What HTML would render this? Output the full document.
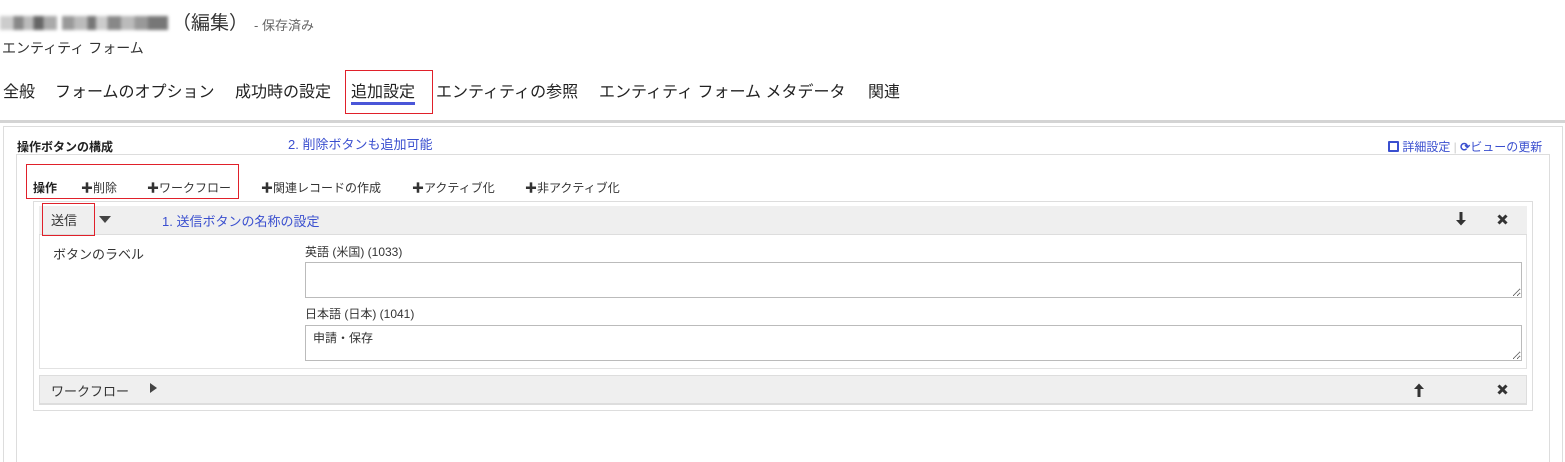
<!DOCTYPE html>
<html><head><meta charset="utf-8"><style>
html,body{margin:0;width:1565px;height:462px;overflow:hidden}
body{background:#fff;font-family:"Liberation Sans","Noto Sans CJK JP",sans-serif;color:#333;position:relative}
.a{position:absolute;white-space:nowrap}
.blue{color:#3a4fcf}
.red{position:absolute;border:1px solid #e0202a}
textarea{position:absolute;border:1px solid #bbb;resize:both;font:12px "Liberation Sans","Noto Sans CJK JP",sans-serif;padding:3px 7px;box-sizing:border-box;margin:0;color:#333}
.plus{font-weight:bold}
</style></head><body>
<div class="a" style="left:0;top:12px;height:20px;width:170px">
<span style="display:inline-block;width:168px;height:14px;margin-top:4px;filter:blur(1.5px);background:linear-gradient(90deg,#ccc 0 8%,#888 8% 14%,#bbb 14% 20%,#666 20% 26%,#aaa 26% 34%,#fff 34% 37%,#999 37% 44%,#bbb 44% 52%,#777 52% 57%,#ccc 57% 64%,#888 64% 72%,#bbb 72% 80%,#999 80% 88%,#777 88% 100%)"></span></div>
<div class="a" style="left:172px;top:8px;font-size:19px;color:#333">（編集）</div>
<div class="a" style="left:254px;top:15px;font-size:13px;color:#666">- 保存済み</div>
<div class="a" style="left:2px;top:38px;font-size:14px;color:#333">エンティティ フォーム</div>
<div class="a" style="left:3px;top:78px;font-size:16px;color:#222">全般</div>
<div class="a" style="left:55px;top:78px;font-size:16px;color:#222">フォームのオプション</div>
<div class="a" style="left:235px;top:78px;font-size:16px;color:#222">成功時の設定</div>
<div class="a" style="left:351px;top:78px;font-size:16px;color:#222">追加設定</div>
<div class="a" style="left:351px;top:102px;width:64px;height:3px;background:#4a56d8"></div>
<div class="red" style="left:345px;top:70px;width:86px;height:42px"></div>
<div class="a" style="left:436px;top:78px;font-size:16px;color:#222">エンティティの参照</div>
<div class="a" style="left:599px;top:78px;font-size:16px;color:#222">エンティティ フォーム メタデータ</div>
<div class="a" style="left:868px;top:78px;font-size:16px;color:#222">関連</div>
<div class="a" style="left:0;top:120px;width:1565px;height:3px;background:#d4d4d4"></div>
<div class="a" style="left:3px;top:126px;width:1558px;height:336px;border:1px solid #ddd;border-bottom:none"></div>
<div class="a" style="left:17px;top:138px;font-size:12px;font-weight:bold;color:#222">操作ボタンの構成</div>
<div class="a blue" style="left:288px;top:134px;font-size:13px">2. 削除ボタンも追加可能</div>
<div class="a" style="left:1388px;top:138px;font-size:12px;color:#3a4fcf"><span style="display:inline-block;width:7px;height:7px;border:2px solid #3a4fcf;border-radius:1px;vertical-align:-1px"></span> 詳細設定 <span style="color:#ccc">|</span> <b>⟳</b>ビューの更新</div>
<div class="a" style="left:16px;top:154px;width:1532px;height:308px;border:1px solid #ddd;border-bottom:none"></div>
<div class="red" style="left:26px;top:164px;width:211px;height:33px"></div>
<div class="a" style="left:33px;top:179px;font-size:12px;font-weight:bold;color:#222">操作</div>
<div class="a" style="left:81px;top:179px;font-size:12px;color:#333"><span class="plus">✚</span>削除</div>
<div class="a" style="left:147px;top:179px;font-size:12px;color:#333"><span class="plus">✚</span>ワークフロー</div>
<div class="a" style="left:261px;top:179px;font-size:12px;color:#333"><span class="plus">✚</span>関連レコードの作成</div>
<div class="a" style="left:412px;top:179px;font-size:12px;color:#333"><span class="plus">✚</span>アクティブ化</div>
<div class="a" style="left:525px;top:179px;font-size:12px;color:#333"><span class="plus">✚</span>非アクティブ化</div>
<div class="a" style="left:33px;top:201px;width:1498px;height:208px;border:1px solid #ddd"></div>
<div class="a" style="left:39px;top:206px;width:1488px;height:28px;background:#efefef;border-bottom:1px solid #ddd"></div>
<div class="a" style="left:39px;top:235px;width:1488px;height:134px;border:1px solid #e2e2e2;border-top:none;box-sizing:border-box"></div>
<div class="red" style="left:42px;top:203px;width:51px;height:31px"></div>
<div class="a" style="left:51px;top:210px;font-size:13px;color:#333">送信</div>
<div class="a" style="left:99px;top:216px;width:0;height:0;border-left:6px solid transparent;border-right:6px solid transparent;border-top:7px solid #444"></div>
<div class="a blue" style="left:162px;top:211px;font-size:13px">1. 送信ボタンの名称の設定</div>
<svg class="a" style="left:1455px;top:212px" width="12" height="14"><path d="M4.5 0h3v8h3.5L6 13.5 1 8h3.5z" fill="#333"/></svg>
<svg class="a" style="left:1497px;top:214px" width="11" height="11"><path d="M1.5 1.5l8 8M9.5 1.5l-8 8" stroke="#333" stroke-width="3"/></svg>
<div class="a" style="left:53px;top:244px;font-size:13px;color:#333">ボタンのラベル</div>
<div class="a" style="left:305px;top:243px;font-size:12px;color:#333">英語 (米国) (1033)</div>
<textarea style="left:305px;top:262px;width:1217px;height:36px"></textarea>
<div class="a" style="left:305px;top:305px;font-size:12px;color:#333">日本語 (日本) (1041)</div>
<textarea style="left:305px;top:325px;width:1217px;height:36px">申請・保存</textarea>
<div class="a" style="left:39px;top:375px;width:1488px;height:30px;background:#efefef;border:1px solid #ddd;border-bottom:2px solid #ddd;box-sizing:border-box"></div>
<div class="a" style="left:51px;top:381px;font-size:13px;color:#333">ワークフロー</div>
<div class="a" style="left:150px;top:383px;width:0;height:0;border-top:5px solid transparent;border-bottom:5px solid transparent;border-left:7px solid #444"></div>
<svg class="a" style="left:1413px;top:383px" width="12" height="14"><path d="M4.5 14h3V6h3.5L6 0.5 1 6h3.5z" fill="#333"/></svg>
<svg class="a" style="left:1497px;top:384px" width="11" height="11"><path d="M1.5 1.5l8 8M9.5 1.5l-8 8" stroke="#333" stroke-width="3"/></svg>
</body></html>
